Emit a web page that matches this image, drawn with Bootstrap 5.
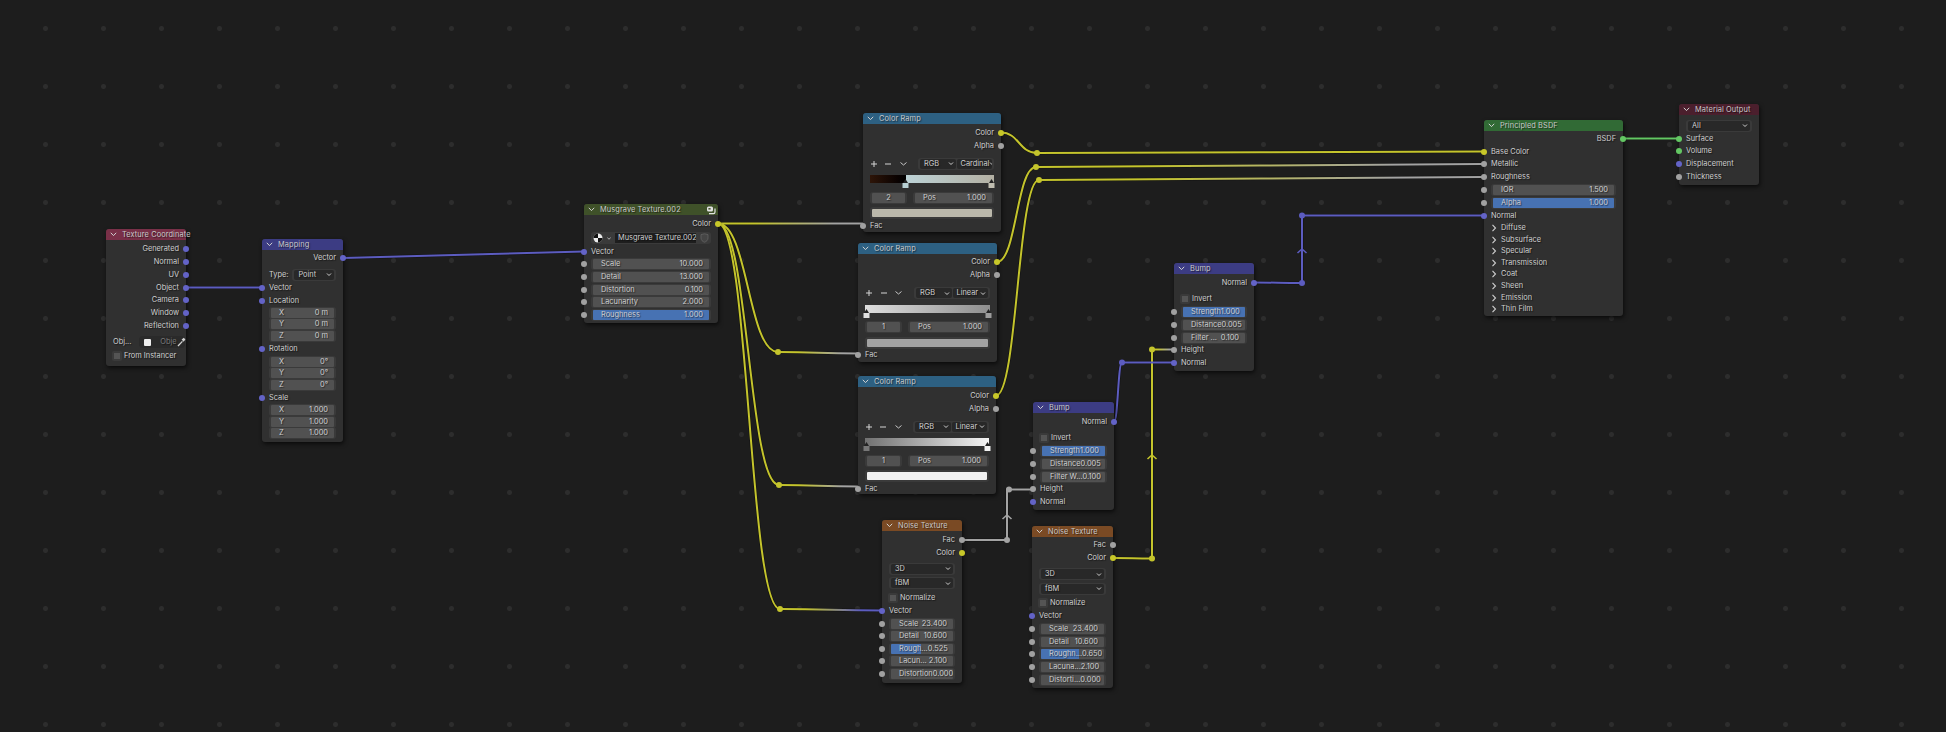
<!DOCTYPE html>
<html lang="en">
<head>
  <meta charset="UTF-8" />
  <meta name="viewport" content="width=device-width, initial-scale=1.0"/>
  <title>Shader Editor</title>
  <link href="https://cdn.jsdelivr.net/npm/bootstrap@5.3.0/dist/css/bootstrap.min.css" rel="stylesheet">
  <style>
    body {
      background-color: #1d1d1d;
      overflow: hidden;
    }
    .nd-canvas {
      width: 1946px;
      height: 732px;
      overflow: hidden;
      background-color: #1d1d1d;
      background-image: radial-gradient(circle at 45.5px 28.5px, #2d2d2d 2px, rgba(45, 45, 45, 0) 3px);
      background-size: 58px 58px;
      font-family: Inter, "Liberation Sans", sans-serif;
      font-size: 7.4px;
      color: #cfcfcf;
    }
    .nd-wires {
      left: 0;
      top: 0;
    }
    .nd-node.card {
      --bs-card-bg: #303030;
      --bs-card-border-width: 0;
      --bs-card-border-radius: 3px;
      --bs-card-inner-border-radius: 3px;
      --bs-card-cap-padding-y: 0;
      --bs-card-cap-padding-x: 0;
      --bs-card-spacer-y: 0;
      --bs-card-spacer-x: 0;
      --bs-card-color: #cfcfcf;
      box-shadow: 1px 2px 4px rgba(0, 0, 0, .65);
    }
    .nd-node .card-header {
      height: 11px;
      line-height: 11px;
      padding-left: 16px;
      border: 0;
      position: relative;
      color: #c9c9c9;
      letter-spacing: .1px;
      white-space: nowrap;
      text-shadow: 1px 1px 1px rgba(0, 0, 0, .55);
    }
    .nd-head-chev {
      position: absolute;
      left: 4px;
      top: 3px;
    }
    .hd-tex { background: #793048 !important; }
    .hd-vec { background: #3c3c83 !important; }
    .hd-mus { background: #3f5129 !important; }
    .hd-ramp { background: #2d6082 !important; }
    .hd-noise { background: #7a4a24 !important; }
    .hd-shade { background: #316a35 !important; }
    .hd-out { background: #4b1f2d !important; }

    .nd-row {
      position: relative;
      padding: 0 7px;
      line-height: 12px;
      white-space: nowrap;
    }
    .nd-row > * {
      text-shadow: 1px 1px 1px rgba(0, 0, 0, .55);
    }
    .nd-sock {
      position: absolute;
      top: 3px;
      width: 6px;
      height: 6px;
      border-radius: 50%;
    }
    .nd-sock.in { left: -3px; }
    .nd-sock.out { right: -3px; }
    .sk-v { background: #6363c7; }
    .sk-g { background: #a1a1a1; }
    .sk-c { background: #c7c729; }
    .sk-s { background: #63c763; }

    .nd-wrap {
      background: #3a3a3a;
      border-radius: 3px;
      padding: 1px 2px;
      height: 12px;
      flex: 1 1 auto;
      min-width: 0;
    }
    .nd-field {
      position: relative;
      height: 10px;
      line-height: 10px;
      background: #515151;
      border-radius: 1px;
      padding: 0 6px 0 8px;
      overflow: hidden;
    }
    .nd-field span { position: relative; }
    .nd-fill {
      position: absolute;
      left: 0;
      top: 0;
      bottom: 0;
      background: #4772b3;
    }
    .nd-sel {
      height: 10px;
      line-height: 10px;
      background: #282828;
      border-radius: 2px;
      padding: 0 2px 0 4px;
      flex: 1 1 0;
      min-width: 0;
      overflow: hidden;
    }
    .nd-check {
      width: 8px;
      height: 8px;
      background: #545454;
      border-radius: 1px;
      margin: 2px 3px 0 0;
      outline: 2px solid #3a3a3a;
      outline-offset: -1px;
    }
    .nd-ctl { width: 15px; height: 12px; }
    .nd-ctl.wide { width: 20px; }
    .nd-modes { width: 76px; gap: 1px; }
    .nd-bar {
      position: relative;
      height: 8px;
      margin: 2px 0 0;
    }
    .nd-stop {
      position: absolute;
      top: 4px;
      width: 7px;
      height: 9px;
    }
    .nd-swatch { height: 8px; border-radius: 1px; }
    .nd-swatch-wrap { height: 12px; padding: 2px; background: #3a3a3a; border-radius: 3px; }
    .nd-count { flex: 0 0 37px; margin-right: 6px; }
    .nd-count .nd-field { padding: 0; text-align: center; }
    .nd-name {
      height: 10px;
      line-height: 10px;
      background: #1e1e1e;
      flex: 1 1 auto;
      padding-left: 3px;
      min-width: 0;
      overflow: hidden;
    }
    .nd-obj {
      height: 12px;
      width: 46px;
      background: #2a2a2a;
      border-radius: 4px;
      color: #7a7a7a;
    }
    .nd-rr { fill: #a1a1a1; }
  </style>
</head>
<body class="m-0">
  <div class="nd-canvas position-relative" id="canvas">
    <svg class="nd-wires position-absolute" id="wires" width="1946" height="732"></svg>
  </div>

  <script>
    // icons
    const chev = '<svg class="ms-auto flex-shrink-0" width="6" height="5" viewBox="0 0 6 5"><path d="M1 1.5 3 3.5 5 1.5" fill="none" stroke="#cfcfcf" stroke-width="1"/></svg>';
    const headChev = '<svg class="nd-head-chev" width="7" height="5" viewBox="0 0 7 5"><path d="M.8 .8 3.5 3.6 6.2 .8" fill="none" stroke="#d0d0d0" stroke-width="1"/></svg>';
    const panelChev = '<svg class="flex-shrink-0 me-1" width="6" height="12" viewBox="0 0 6 12"><path d="M1.5 2.8 4.5 6 1.5 9.2" fill="none" stroke="#cfcfcf" stroke-width="1.1"/></svg>';
    const matIcon = '<svg class="position-absolute" style="right:2px;top:1px" width="10" height="10" viewBox="0 0 10 10"><rect x="1" y="1.5" width="6" height="5" rx="1.5" fill="#e2e2e2"/><path d="M3 8.6h4.4a1.6 1.6 0 0 0 1.6-1.6V3.6" fill="none" stroke="#e2e2e2" stroke-width="1.2"/><rect x="2.4" y="3" width="2.2" height="1.6" fill="#4a5a35"/></svg>';
    const ball = '<svg class="flex-shrink-0" width="10" height="10" viewBox="0 0 10 10"><circle cx="5" cy="5" r="4.5" fill="#ececec"/><path d="M5 .5A4.5 4.5 0 0 0 .5 5H5ZM5 5V9.5A4.5 4.5 0 0 0 9.5 5Z" fill="#111"/></svg>';
    const shield = '<svg class="flex-shrink-0 ms-1" width="9" height="10" viewBox="0 0 9 10"><path d="M1 1.6 4.5 .8 8 1.6V5C8 7.2 6.3 8.6 4.5 9.2 2.7 8.6 1 7.2 1 5Z" fill="#454545" stroke="#636363" stroke-width=".8"/></svg>';
    const dropper = '<svg class="flex-shrink-0 me-1" width="9" height="10" viewBox="0 0 9 10"><path d="M1 9 5.4 4.4" stroke="#d5d5d5" stroke-width="1.3"/><path d="M4.6 2.4 6.8 .8 8.4 2.4 6.6 4.8Z" fill="#d5d5d5"/></svg>';
    const plus = '<svg width="9" height="12" viewBox="0 0 9 12"><path d="M1 6H7M4 3V9" stroke="#d4d4d4" stroke-width="1"/></svg>';
    const minus = '<svg width="9" height="12" viewBox="0 0 9 12"><path d="M1 6H7" stroke="#d4d4d4" stroke-width="1"/></svg>';
    const down = '<svg width="9" height="12" viewBox="0 0 9 12"><path d="M1.5 4.5 4.5 7 7.5 4.5" fill="none" stroke="#c8c8c8" stroke-width="1"/></svg>';

    // row helpers, y is the centre of the row on the canvas
    const sock = (c, side) => c ? `<i class="nd-sock ${side} sk-${c}"></i>` : '';
    const out = (label, c, y) => ({ y, html: `<div class="text-end">${label}</div>${sock(c, 'out')}` });
    const inp = (label, c, y) => ({ y, html: `<div>${label}</div>${sock(c, 'in')}` });
    function field(label, val, y, c, fill) {
      const bar = fill ? `<div class="nd-fill" style="width:${fill}%"></div>` : '';
      return { y, html: `<div class="nd-wrap"><div class="nd-field d-flex justify-content-between">${bar}<span>${label}</span><span>${val}</span></div></div>${c ? sock(c, 'in') : ''}`, flex: 1 };
    }
    const sel = (label, y) => ({ y, html: `<div class="nd-wrap d-flex"><div class="nd-sel d-flex align-items-center"><span>${label}</span>${chev}</div></div>`, flex: 1 });
    const check = (label, y) => ({ y, html: `<div class="nd-check flex-shrink-0"></div><div>${label}</div>`, flex: 1 });
    const panel = (label, y) => ({ y, html: `${panelChev}<div>${label}</div>`, flex: 1 });

    function ramp(y, mode, stops, grad, swatch, count) {
      return [
        out('Color', 'c', y), out('Alpha', 'g', y + 13),
        { y: y + 31, flex: 1, html: `<div class="nd-ctl">${plus}</div><div class="nd-ctl">${minus}</div><div class="nd-ctl wide">${down}</div>
          <div class="nd-wrap nd-modes d-flex flex-grow-0 flex-shrink-0 ms-auto"><div class="nd-sel d-flex align-items-center"><span>RGB</span>${chev}</div><div class="nd-sel d-flex align-items-center"><span>${mode}</span>${chev}</div></div>` },
        { y: y + 46.5, html: `<div class="nd-bar" style="background:${grad}">${stops.map(s => `<svg class="nd-stop" style="left:calc(${s[0]}% - 3.5px)" viewBox="0 0 7 9"><path d="M3.5 0 6 4H1Z" fill="#222"/><rect x=".5" y="4" width="6" height="5" fill="${s[1]}"/></svg>`).join('')}</div>` },
        { y: y + 63, flex: 1, html: `<div class="nd-wrap nd-count"><div class="nd-field">${count}</div></div><div class="nd-wrap"><div class="nd-field d-flex justify-content-between"><span>Pos</span><span>1.000</span></div></div>` },
        { y: y + 78.5, html: `<div class="nd-swatch-wrap"><div class="nd-swatch" style="background:${swatch}"></div></div>` },
        inp('Fac', 'g', y + 91)
      ];
    }

    function noise(y, rough, fill, lac, dist) {
      return [
        out('Fac', 'g', y), out('Color', 'c', y + 13),
        sel('3D', y + 29), sel('fBM', y + 43.5), check('Normalize', y + 58), inp('Vector', 'v', y + 71),
        field('Scale', '23.400', y + 84, 'g'), field('Detail', '10.600', y + 96.7, 'g'),
        field(rough, fill > 55 ? '0.650' : '0.525', y + 109.5, 'g', fill),
        field(lac, '2.100', y + 122, 'g'), field(dist, '0.000', y + 135, 'g')
      ];
    }

    function bump(y, filter) {
      return [
        out('Normal', 'v', y), check('Invert', y + 16),
        field('Strength', '1.000', y + 29, 'g', 100), field('Distance', '0.005', y + 42, 'g'), field(filter, '0.100', y + 55, 'g'),
        inp('Height', 'g', y + 67.5), inp('Normal', 'v', y + 80)
      ];
    }

    const nodes = [
      { t: 'Texture Coordinate', c: 'hd-tex', x: 106, y: 229, r: 186, b: 366, rows: [
        out('Generated', 'v', 249), out('Normal', 'v', 262), out('UV', 'v', 275), out('Object', 'v', 287.5),
        out('Camera', 'v', 300), out('Window', 'v', 313), out('Reflection', 'v', 326),
        { y: 342, flex: 1, html: `<div class="me-2">Obj...</div><div class="nd-obj d-flex align-items-center"><svg class="ms-1 flex-shrink-0" width="9" height="9" viewBox="0 0 9 9"><rect x="1" y="1" width="7" height="7" rx="1" fill="#eee"/></svg><span class="ms-2 flex-grow-1">Obje</span>${dropper}</div>` },
        check('From Instancer', 356)
      ] },
      { t: 'Mapping', c: 'hd-vec', x: 262, y: 239, r: 343, b: 442, rows: [
        out('Vector', 'v', 258),
        { y: 274.5, flex: 1, html: `<div class="me-1 flex-shrink-0">Type:</div><div class="nd-wrap d-flex"><div class="nd-sel d-flex align-items-center"><span>Point</span>${chev}</div></div>` },
        inp('Vector', 'v', 287.5), inp('Location', 'v', 300.5),
        field('X', '0 m', 313), field('Y', '0 m', 324), field('Z', '0 m', 335.5),
        inp('Rotation', 'v', 349),
        field('X', '0°', 362), field('Y', '0°', 373), field('Z', '0°', 384.5),
        inp('Scale', 'v', 398),
        field('X', '1.000', 410), field('Y', '1.000', 421.5), field('Z', '1.000', 433)
      ] },
      { t: 'Musgrave Texture.002', c: 'hd-mus', icon: matIcon, x: 584, y: 204, r: 718, b: 323, rows: [
        out('Color', 'c', 223.5),
        { y: 238, flex: 1, html: `<div class="nd-wrap d-flex align-items-center">${ball}<svg class="mx-1 flex-shrink-0" width="4" height="5" viewBox="0 0 4 5"><path d="M.4 1.5 2 3.3 3.6 1.5" fill="none" stroke="#ccc" stroke-width=".8"/></svg><div class="nd-name">Musgrave Texture.002</div>${shield}</div>` },
        inp('Vector', 'v', 251.5),
        field('Scale', '10.000', 263.5, 'g'), field('Detail', '13.000', 276.5, 'g'), field('Distortion', '0.100', 289.5, 'g'),
        field('Lacunarity', '2.000', 302, 'g'), field('Roughness', '1.000', 315, 'g', 100)
      ] },
      { t: 'Color Ramp', c: 'hd-ramp', x: 863, y: 113, r: 1001, b: 232, rows:
        ramp(132.5, 'Cardinal', [[29, '#b8d0d4'], [98, '#c0bdb0']], 'linear-gradient(90deg,#2e1508 0,#0a0201 22%,#000 29%,#bcd2d6 29.1%,#b3b0a3 100%)', '#bbb8ab', '2') },
      { t: 'Color Ramp', c: 'hd-ramp', x: 858, y: 243, r: 997, b: 362, rows:
        ramp(262, 'Linear', [[1, '#e0e0e0'], [99, '#9c9c9c']], 'linear-gradient(90deg,#dedede,#8f8f8f)', '#a3a3a3', '1') },
      { t: 'Color Ramp', c: 'hd-ramp', x: 858, y: 376, r: 996, b: 494, rows:
        ramp(395.5, 'Linear', [[1, '#777'], [99, '#f2f2f2']], 'linear-gradient(90deg,#717171,#f4f4f4)', '#f2f2f2', '1') },
      { t: 'Noise Texture', c: 'hd-noise', x: 882, y: 520, r: 962, b: 683, rows: noise(539.5, 'Rough...', 48, 'Lacun...', 'Distortion') },
      { t: 'Noise Texture', c: 'hd-noise', x: 1032, y: 526, r: 1113, b: 688, rows: noise(545, 'Roughn...', 61, 'Lacuna...', 'Distorti...') },
      { t: 'Bump', c: 'hd-vec', x: 1033, y: 402, r: 1114, b: 510, rows: bump(421.5, 'Filter W...') },
      { t: 'Bump', c: 'hd-vec', x: 1174, y: 263, r: 1254, b: 371, rows: bump(282.5, 'Filter ...') },
      { t: 'Principled BSDF', c: 'hd-shade', x: 1484, y: 120, r: 1623, b: 316, rows: [
        out('BSDF', 's', 138.5), inp('Base Color', 'c', 151.5), inp('Metallic', 'g', 164), inp('Roughness', 'g', 177),
        field('IOR', '1.500', 190, 'g'), field('Alpha', '1.000', 203, 'g', 100), inp('Normal', 'v', 215.5),
        panel('Diffuse', 228), panel('Subsurface', 239.5), panel('Specular', 250.5), panel('Transmission', 262.5),
        panel('Coat', 273.5), panel('Sheen', 285.5), panel('Emission', 297.5), panel('Thin Film', 308.5)
      ] },
      { t: 'Material Output', c: 'hd-out', x: 1679, y: 104, r: 1759, b: 185, rows: [
        sel('All', 125.5), inp('Surface', 's', 138.5), inp('Volume', 's', 150.5), inp('Displacement', 'v', 163.5), inp('Thickness', 'g', 176.5)
      ] }
    ];

    // rows flow down the card, each one as tall as the step to the next row
    const canvas = document.getElementById('canvas');
    nodes.forEach(n => {
      const firstTop = n.rows[0].y - 6 - (n.y + 11);
      const rows = n.rows.map((r, i) => {
        const next = n.rows[i + 1];
        const h = next ? next.y - r.y : 12;
        return `<div class="nd-row${r.flex ? ' d-flex' : ''}" style="height:${h}px">${r.html}</div>`;
      }).join('');
      canvas.insertAdjacentHTML('beforeend', `
        <div class="card nd-node position-absolute" style="left:${n.x}px;top:${n.y}px;width:${n.r - n.x}px;height:${n.b - n.y}px">
          <div class="card-header ${n.c}">${headChev}${n.t}${n.icon || ''}</div>
          <div class="card-body" style="padding-top:${firstTop}px">${rows}</div>
        </div>`);
    });

    // wires
    const Y = '#c4c42c', G = '#a3a3a3', V = '#5c5cc0', S = '#63c763';
    let gradId = 0, defs = '', under = '', over = '';
    function wire(d, c1, c2, x1, x2) {
      let stroke = c1;
      if (c2 && c2 !== c1) {
        gradId++;
        defs += `<linearGradient id="g${gradId}" gradientUnits="userSpaceOnUse" x1="${x1}" y1="0" x2="${x2}" y2="0"><stop offset=".25" stop-color="${c1}"/><stop offset=".8" stop-color="${c2}"/></linearGradient>`;
        stroke = `url(#g${gradId})`;
      }
      under += `<path d="${d}" fill="none" stroke="#101010" stroke-opacity=".8" stroke-width="3.2"/>`;
      over += `<path d="${d}" fill="none" stroke="${stroke}" stroke-width="2"/>`;
    }
    function curve(x1, y1, x2, y2, c1, c2, k = 0.5) {
      const dx = (x2 - x1) * k;
      wire(`M${x1} ${y1}C${x1 + dx} ${y1} ${x2 - dx} ${y2} ${x2} ${y2}`, c1, c2, x1, x2);
    }
    function dot(x, y, c) {
      over += `<circle cx="${x}" cy="${y}" r="3" fill="${c}"/>`;
    }
    function arrow(x, y, c) {
      over += `<path d="M${x - 4.5} ${y + 3} ${x} ${y - 1} ${x + 4.5} ${y + 3}" fill="none" stroke="${c}" stroke-width="1.6"/>`;
    }

    curve(186, 287.5, 262, 287.5, V);
    curve(343, 258, 584, 251.5, V, V, .05);
    curve(718, 223.5, 863, 223.5, Y, G);
    curve(718, 223.5, 778, 352, Y);
    curve(778, 352, 858, 353.5, Y, G);
    curve(718, 223.5, 779, 485, Y);
    curve(779, 485, 858, 486.5, Y, G);
    curve(718, 223.5, 780, 609, Y);
    curve(780, 609, 882, 610.5, Y, V);
    dot(778, 352, Y); dot(779, 485, Y); dot(780, 609, Y);

    curve(1001, 132.5, 1037, 153, Y);
    curve(1037, 153, 1484, 151.5, Y, Y, .05);
    curve(997, 262, 1036, 167, Y);
    curve(1036, 167, 1484, 164, Y, G, .05);
    curve(996, 395.5, 1039, 180, Y);
    curve(1039, 180, 1484, 177, Y, G, .05);
    dot(1037, 153, Y); dot(1036, 167, Y); dot(1039, 180, Y);

    curve(962, 540, 1007, 540, G);
    wire('M1007 540V489.5H1033', G);
    arrow(1007, 516, G);
    dot(1007, 540, G); dot(1009, 489.5, G);

    curve(1113, 558, 1152, 558.5, Y);
    wire('M1152 558.5V349.5', Y);
    curve(1152, 349.5, 1174, 349.5, Y, G);
    arrow(1152, 456, Y);
    dot(1152, 558.5, Y); dot(1152, 349.5, Y);

    curve(1114, 421.5, 1122, 362.5, V);
    curve(1122, 362.5, 1174, 362.5, V);
    dot(1122, 362.5, V);

    curve(1254, 282.5, 1302, 283, V);
    wire('M1302 283V215.5H1484', V);
    arrow(1302, 250, V);
    dot(1302, 283, V); dot(1302, 215.5, V);

    curve(1623, 138.5, 1679, 138.5, S);

    document.getElementById('wires').innerHTML = `<defs>${defs}</defs>${under}${over}`;
  </script>
  <script src="https://cdn.jsdelivr.net/npm/bootstrap@5.3.0/dist/js/bootstrap.bundle.min.js"></script>
</body>
</html>
